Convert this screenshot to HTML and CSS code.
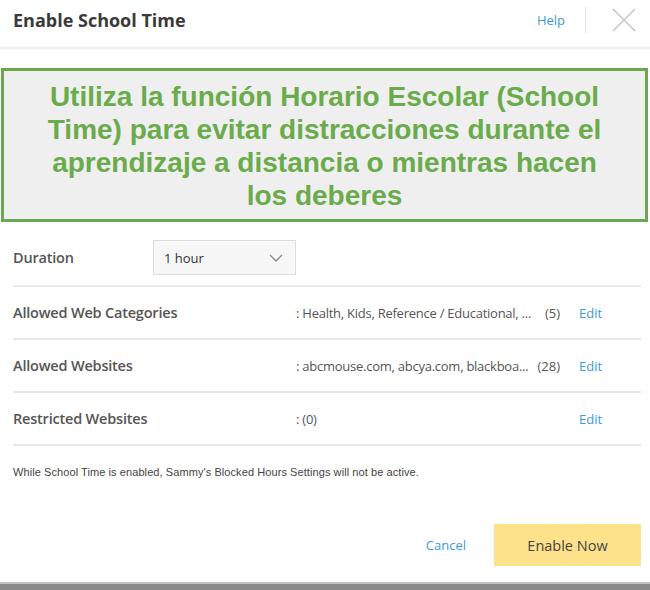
FILE: index.html
```html
<!DOCTYPE html>
<html lang="en">
<head>
    <meta charset="UTF-8">
    <meta name="viewport" content="width=device-width, initial-scale=1.0">
    <title>Enable School Time</title>
    <link rel="stylesheet" href="styles.css">
</head>

<body>
    <div class="dialog">
        <div class="dialog-head">
            <h1>Enable School Time</h1>
            <div class="head-actions">
                <a class="help" href="#">Help</a>
                <span class="sep"></span>
                <button class="close" aria-label="Close">
                    <svg width="24" height="24" viewBox="0 0 24 24">
                        <path d="M1 1 L23 23 M23 1 L1 23" stroke="#c8c8c8" stroke-width="1.6" fill="none"/>
                    </svg>
                </button>
            </div>
        </div>

        <div class="banner">
            Utiliza la función Horario Escolar (School Time) para evitar distracciones durante el aprendizaje a distancia o mientras hacen los deberes
        </div>

        <div class="settings">
            <div class="row row-duration">
                <span class="label">Duration</span>
                <div class="select">
                    <span>1 hour</span>
                    <svg width="14" height="8" viewBox="0 0 14 8">
                        <path d="M1 1 L7 7 L13 1" stroke="#888" stroke-width="1.4" fill="none"/>
                    </svg>
                </div>
            </div>
            <div class="row">
                <span class="label">Allowed Web Categories</span>
                <span class="value">: Health, Kids, Reference / Educational, ...</span>
                <span class="count">(5)</span>
                <a class="edit" href="#">Edit</a>
            </div>
            <div class="row">
                <span class="label">Allowed Websites</span>
                <span class="value">: abcmouse.com, abcya.com, blackboa...</span>
                <span class="count">(28)</span>
                <a class="edit" href="#">Edit</a>
            </div>
            <div class="row">
                <span class="label">Restricted Websites</span>
                <span class="value">: (0)</span>
                <span class="count"></span>
                <a class="edit" href="#">Edit</a>
            </div>
        </div>

        <p class="note">While School Time is enabled, Sammy's Blocked Hours Settings will not be active.</p>

        <div class="actions">
            <a class="cancel" href="#">Cancel</a>
            <button class="enable-btn">Enable Now</button>
        </div>
    </div>
    <div class="bottom-bar"></div>
</body>
</html>
```

FILE: styles.css
```css
body {
    margin: 0;
    font-family: "Open Sans", "Noto Sans", sans-serif;
    background-color: white;
    color: #555;
}
a {
    text-decoration: none;
}
.dialog {
    width: 650px;
    height: 582px;
    display: flex;
    flex-direction: column;
}
.dialog-head {
    height: 47px;
    border-bottom: 2px solid #ececec;
    display: flex;
    align-items: center;
    justify-content: space-between;
    padding: 0 14px 0 13px;
}
.dialog-head h1 {
    margin: 0;
    margin-top: -8px;
    font-size: 18px;
    font-weight: 700;
    color: #3a3a3a;
}
.head-actions {
    display: flex;
    align-items: center;
    margin-top: -8px;
}
.help {
    color: #3a9bd9;
    font-size: 13px;
}
.sep {
    width: 1px;
    height: 26px;
    background-color: #e2e2e2;
    margin: 0 26px 0 20px;
}
.close {
    background: none;
    border: none;
    padding: 0;
    cursor: pointer;
    display: flex;
}
.banner {
    margin: 19px 2px 8px 1px;
    border: 3px solid #6aa84f;
    background-color: #efefef;
    color: #6aab4c;
    font-family: "Liberation Sans", Arial, sans-serif;
    font-weight: bold;
    font-size: 28px;
    line-height: 33px;
    text-align: center;
    padding: 9px 30px 7px;
}
.settings {
    padding: 0 9px 0 13px;
}
.row {
    height: 51px;
    border-bottom: 2px solid #e8e8e8;
    display: flex;
    align-items: center;
    font-size: 13px;
}
.row-duration {
    height: 55px;
}
.label {
    flex-shrink: 0;
    font-size: 14.5px;
    font-weight: 600;
    color: #555;
    letter-spacing: -0.2px;
}
.row .label {
    width: 283px;
}
.row-duration .label {
    width: 140px;
}
.select {
    width: 143px;
    height: 35px;
    border: 1px solid #dcdcdc;
    background-color: #f7f7f7;
    display: flex;
    align-items: center;
    justify-content: space-between;
    padding: 0 12px 0 10px;
    box-sizing: border-box;
    font-size: 13px;
    color: #333;
}
.value {
    width: 240px;
    color: #555;
    letter-spacing: -0.25px;
}
.count {
    width: 24px;
    text-align: right;
    color: #555;
    margin-right: 19px;
}
.edit {
    color: #3a9bd9;
    font-size: 13px;
}
.note {
    margin: 20px 13px 0;
    font-family: "Liberation Sans", Arial, sans-serif;
    font-size: 11px;
    letter-spacing: 0.08px;
    color: #444;
}
.actions {
    margin-top: auto;
    margin-bottom: 16px;
    display: flex;
    align-items: center;
    justify-content: flex-end;
    padding-right: 9px;
}
.cancel {
    color: #3a9bd9;
    font-size: 13px;
    margin-right: 28px;
}
.enable-btn {
    width: 147px;
    height: 42px;
    border: none;
    background-color: #fde28b;
    color: #444;
    font-family: "Open Sans", "Noto Sans", sans-serif;
    font-size: 14.5px;
    cursor: pointer;
}
.bottom-bar {
    height: 6px;
    border-top: 2px solid #c4c4c4;
    background-color: #8a8a8a;
}
```
